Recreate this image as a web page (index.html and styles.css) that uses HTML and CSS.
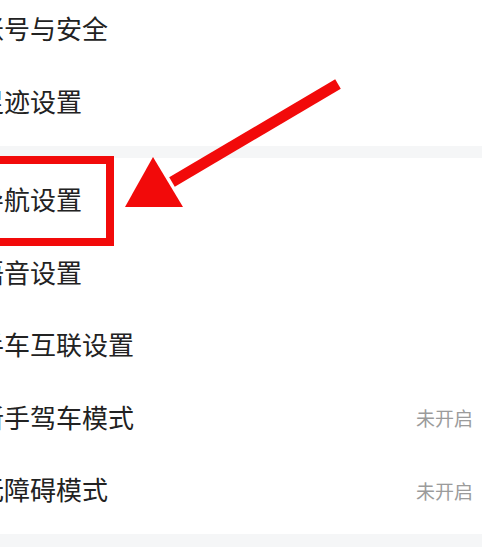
FILE: index.html
```html
<!DOCTYPE html>
<html lang="zh-CN">
<head>
<meta charset="utf-8">
<link rel="stylesheet" href="styles.css">
</head>
<body>
<div class="page">
  <div class="group group-top">
    <div class="row"><span class="label">账号与安全</span></div>
    <div class="row"><span class="label">足迹设置</span></div>
  </div>
  <div class="band"></div>
  <div class="group">
    <div class="row"><span class="label">导航设置</span></div>
    <div class="row"><span class="label">语音设置</span></div>
    <div class="row"><span class="label">手车互联设置</span></div>
    <div class="row"><span class="label">新手驾车模式</span><span class="value">未开启</span></div>
    <div class="row"><span class="label">无障碍模式</span><span class="value">未开启</span></div>
  </div>
  <div class="band"></div>
</div>
<div class="highlight"></div>
<svg class="arrow" width="482" height="549" viewBox="0 0 482 549">
  <line x1="338" y1="84" x2="172" y2="182" stroke="#f20a0a" stroke-width="11"/>
  <polygon points="153,157 125,207 183,207" fill="#f20a0a"/>
</svg>
</body>
</html>
```
FILE: styles.css
```css
html, body {
  margin: 0;
  padding: 0;
  background: #ffffff;
  overflow: hidden;
}
body {
  width: 482px;
  height: 549px;
  position: relative;
  font-family: "Noto Sans CJK SC", "Noto Sans", sans-serif;
}
.page {
  margin-top: -13px;
  display: flex;
  flex-direction: column;
}
.group {
  display: flex;
  flex-direction: column;
  padding: 6.75px 0;
}
.row {
  height: 72.5px;
  display: flex;
  align-items: center;
  justify-content: space-between;
  padding-right: 9px;
  margin-left: -22px;
}
.label {
  font-size: 26px;
  color: #222222;
  line-height: 1;
  padding-bottom: 4px;
}
.value {
  font-size: 19px;
  color: #9b9b9b;
  line-height: 1;
  padding-bottom: 2px;
}
.band {
  height: 12.5px;
  background: #f5f6f7;
}
.highlight {
  position: absolute;
  left: -20px;
  top: 156px;
  width: 118px;
  height: 74px;
  border: 8px solid #f20a0a;
}
.arrow {
  position: absolute;
  left: 0;
  top: 0;
}
```
